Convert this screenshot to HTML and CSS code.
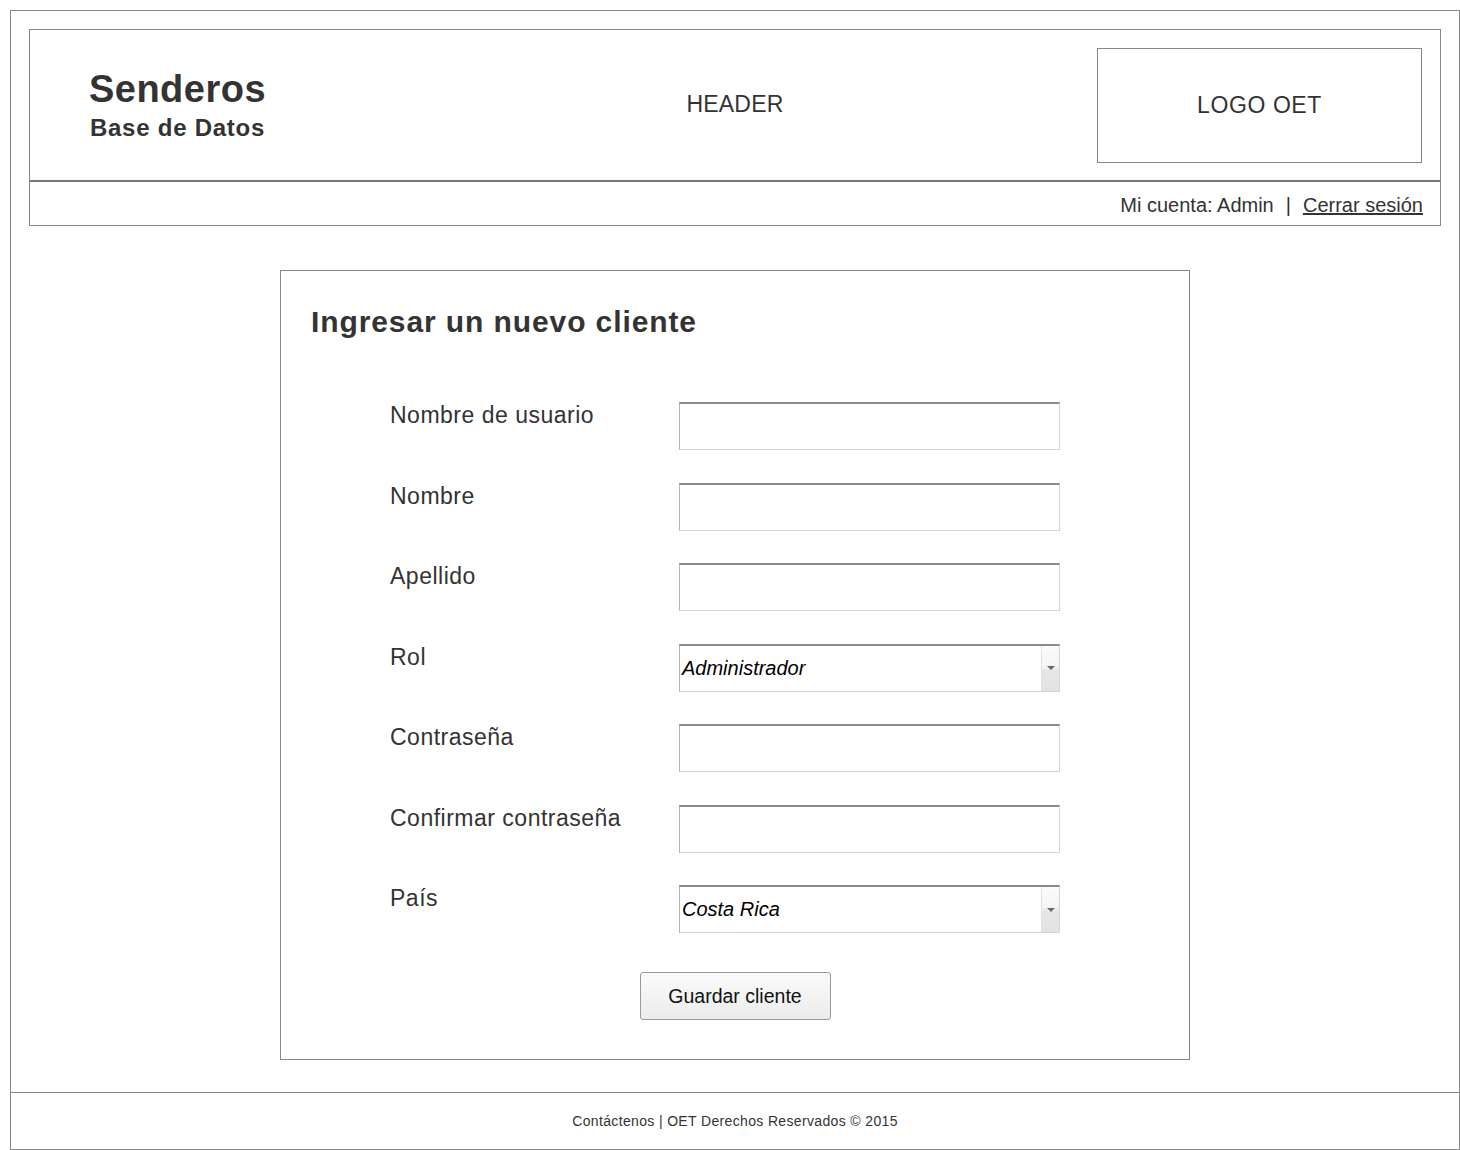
FILE: index.html
```html
<!DOCTYPE html>
<html lang="es">
<head>
<meta charset="utf-8">
<title>Senderos - Ingresar un nuevo cliente</title>
<link rel="stylesheet" href="styles.css">
</head>
<body>
<div class="page">
  <div class="main">
    <header class="site-header">
      <div class="header-top">
        <div class="brand">
          <div class="brand-name">Senderos</div>
          <div class="brand-sub">Base de Datos</div>
        </div>
        <div class="header-label">HEADER</div>
        <div class="logo-box">LOGO OET</div>
      </div>
      <div class="account-bar">
        <span>Mi cuenta: Admin</span><span class="sep">|</span><a class="logout" href="#">Cerrar sesión</a>
      </div>
    </header>

    <section class="form-card">
      <h1 class="form-title">Ingresar un nuevo cliente</h1>
      <div class="form-grid">
        <label class="field-label">Nombre de usuario</label>
        <div class="text-input"></div>

        <label class="field-label">Nombre</label>
        <div class="text-input"></div>

        <label class="field-label">Apellido</label>
        <div class="text-input"></div>

        <label class="field-label">Rol</label>
        <div class="select-input"><span class="select-value">Administrador</span><span class="select-arrow"><span class="tri"></span></span></div>

        <label class="field-label">Contraseña</label>
        <div class="text-input"></div>

        <label class="field-label">Confirmar contraseña</label>
        <div class="text-input"></div>

        <label class="field-label">País</label>
        <div class="select-input"><span class="select-value">Costa Rica</span><span class="select-arrow"><span class="tri"></span></span></div>
      </div>
      <div class="actions">
        <button class="save-btn" type="button">Guardar cliente</button>
      </div>
    </section>
  </div>

  <footer class="site-footer">Contáctenos | OET Derechos Reservados © 2015</footer>
</div>
</body>
</html>
```

FILE: styles.css
```css
* { box-sizing: border-box; }

html, body {
  margin: 0;
  padding: 0;
  background: #fff;
  font-family: "Liberation Sans", Arial, sans-serif;
  color: #333;
}

.page {
  width: 1450px;
  height: 1140px;
  margin: 10px;
  border: 1px solid #888;
  display: flex;
  flex-direction: column;
}

.main {
  flex: 1;
  padding: 18px 18px 0;
}

.site-header {
  border: 1px solid #888;
}

.header-top {
  height: 152px;
  display: grid;
  grid-template-columns: 1fr auto 1fr;
  align-items: center;
  border-bottom: 2px solid #777;
}

.brand {
  justify-self: start;
  width: 295px;
  text-align: center;
  margin-top: 0;
}

.brand-name {
  font-size: 38px;
  line-height: 40px;
  font-weight: bold;
  letter-spacing: 0.5px;
}

.brand-sub {
  margin-top: 6px;
  font-size: 24px;
  line-height: 26px;
  font-weight: bold;
  letter-spacing: 0.75px;
}

.header-label {
  font-size: 23px;
  line-height: 26px;
  letter-spacing: 0.2px;
  margin-top: -2px;
}

.logo-box {
  justify-self: end;
  align-self: start;
  margin: 18px 18px 0 0;
  width: 325px;
  height: 115px;
  border: 1px solid #888;
  display: flex;
  align-items: center;
  justify-content: center;
  font-size: 23px;
  letter-spacing: 0.6px;
}

.account-bar {
  height: 43px;
  display: flex;
  align-items: center;
  justify-content: flex-end;
  padding: 3px 17px 0 0;
  font-size: 20px;
}

.account-bar .sep {
  margin: 0 12px 0 12px;
}

.logout {
  color: #333;
  text-decoration: underline;
}

.form-card {
  width: 910px;
  margin: 44px auto 0;
  border: 1px solid #888;
  padding: 34px 0 39px;
}

.form-title {
  margin: 0 0 0 30px;
  font-size: 30px;
  line-height: 34px;
  font-weight: bold;
  letter-spacing: 0.9px;
  color: #333;
}

.form-grid {
  margin: 63px 0 0 109px;
  display: grid;
  grid-template-columns: 289px 381px;
  row-gap: 32.5px;
}

.field-label {
  font-size: 23px;
  line-height: 26px;
  letter-spacing: 0.5px;
  color: #333;
}

.text-input,
.select-input {
  height: 48px;
  border-top: 2px solid #8a8a8a;
  border-left: 1px solid #b4b4b4;
  border-right: 1px solid #d4d4d4;
  border-bottom: 1px solid #d4d4d4;
  background: #fff;
}

.select-input {
  display: flex;
  align-items: stretch;
}

.select-value {
  flex: 1;
  display: flex;
  align-items: center;
  padding-left: 2px;
  font-size: 20px;
  font-style: italic;
  color: #000;
}

.select-arrow {
  width: 18px;
  border-left: 1px solid #e0e0e0;
  background: linear-gradient(#fbfbfb 0%, #f4f4f4 45%, #e6e6e6 55%, #e2e2e2 100%);
  display: flex;
  align-items: center;
  justify-content: center;
}

.tri {
  width: 0;
  height: 0;
  border-left: 4px solid transparent;
  border-right: 4px solid transparent;
  border-top: 4px solid #6a6a6a;
}

.actions {
  margin-top: 39px;
  display: flex;
  justify-content: center;
}

.save-btn {
  width: 191px;
  height: 48px;
  border: 1px solid #999;
  border-radius: 3px;
  background: linear-gradient(#fafafa, #ececec);
  font-family: "Liberation Sans", Arial, sans-serif;
  font-size: 19.5px;
  color: #111;
  padding: 0;
}

.site-footer {
  height: 57px;
  border-top: 1px solid #888;
  display: flex;
  align-items: center;
  justify-content: center;
  font-size: 14px;
  letter-spacing: 0.35px;
  color: #333;
}
```
